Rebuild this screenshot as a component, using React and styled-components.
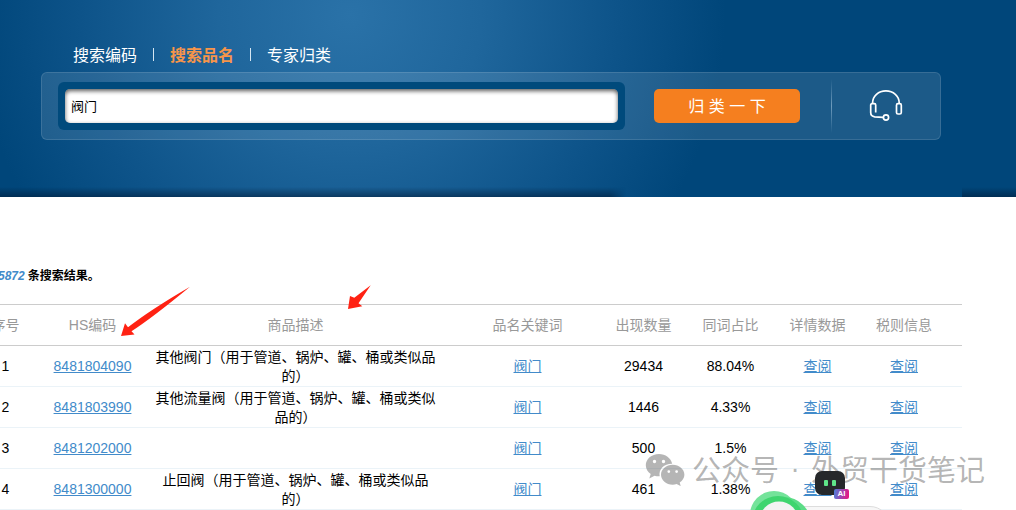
import { useState } from "react";
import styled, { createGlobalStyle } from "styled-components";

const GlobalStyle = createGlobalStyle`
  * {
    box-sizing: border-box;
  }
  body {
    margin: 0;
    background-color: white;
    color: black;
    font-family: "Liberation Sans", "Noto Sans CJK SC", sans-serif;
    font-size: 14px;
  }
`;

const Container = styled.div`
  position: relative;
  min-height: 100vh;
  overflow: hidden;
`;

/* search area */
const Hero = styled.header`
  position: relative;
  height: 197px;
  padding: 44px 75px 0 41px;
  background: radial-gradient(
    ellipse 375px 370px at 350px 15px,
    #2a72a8 0%,
    #1f669c 35%,
    #0d5389 72%,
    #00467a 100%
  );
`;
const HeroShade = styled.div`
  position: absolute;
  left: ${({ $left }) => $left};
  right: ${({ $right }) => $right};
  bottom: 0;
  height: 10px;
  background: linear-gradient(transparent, rgba(0, 20, 45, 0.5));
  mask-image: ${({ $fade }) =>
    $fade ? "linear-gradient(to left, transparent, black 16px)" : "none"};
`;
const Tabs = styled.nav`
  display: flex;
  align-items: center;
  height: 24px;
  padding-left: 32px;
`;
const Tab = styled.a`
  font-size: 16px;
  line-height: 24px;
  text-decoration: none;
  color: ${({ $active }) => ($active ? "#f7954a" : "white")};
  font-weight: ${({ $active }) => ($active ? 700 : 400)};
  & + & {
    margin-left: 16px;
    padding-left: 17px;
    background: linear-gradient(#d5e6f2, #d5e6f2) 0 4px / 1px 13px no-repeat;
  }
`;
const SearchPanel = styled.form`
  display: flex;
  align-items: center;
  height: 68px;
  margin-top: 4px;
  max-width: 900px;
  padding-left: 16px;
  border: 1px solid rgba(255, 255, 255, 0.12);
  border-radius: 6px;
  background-color: rgba(255, 255, 255, 0.11);
`;
const InputBox = styled.label`
  flex: 1;
  display: flex;
  padding: 7px;
  border-radius: 6px;
  background-color: #004a7c;
`;
const SearchInput = styled.input`
  width: 100%;
  height: 34px;
  padding: 0 6px 2px;
  border: 0;
  border-radius: 5px;
  outline: 0;
  background-color: white;
  color: black;
  box-shadow: inset 0 2px 4px rgba(0, 0, 0, 0.65);
  font-family: inherit;
  font-size: 13px;
`;
const SearchButton = styled.button`
  width: 146px;
  height: 34px;
  margin: 0 31px 0 29px;
  padding: 0 0 3px;
  border: 0;
  border-radius: 5px;
  background-color: #f57f1f;
  color: white;
  font-family: inherit;
  font-size: 16px;
  cursor: pointer;
`;
const Divider = styled.span`
  width: 1px;
  height: 54px;
  background: linear-gradient(transparent, #6f9cbd, transparent);
`;
const Service = styled.a`
  width: 108px;
  display: flex;
  justify-content: center;
`;

/* results, the table starts left of the window */
const Results = styled.main`
  margin: 0 54px 0 -38px;
`;
const Summary = styled.p`
  margin: 0;
  padding: 70px 0 19px 36px;
  font-size: 12px;
  line-height: 18px;
  font-weight: 700;
  & em {
    margin-right: 3px;
    color: #428bca;
  }
`;
const Table = styled.table`
  width: 100%;
  table-layout: fixed;
  border-collapse: collapse;
  & tr {
    height: 41px;
  }
  & thead tr {
    border-top: 1px solid #ccc;
    border-bottom: 1px solid #ccc;
  }
  & tbody tr {
    border-bottom: 1px solid #ebf3f8;
  }
`;
const HeadCell = styled.th`
  width: ${({ $width }) => $width};
  padding: 0 ${({ $last }) => ($last ? 15 : 0)}px 0 0;
  color: #999;
  font-weight: 400;
  line-height: 19px;
`;
const Cell = styled.td`
  padding: ${({ $pad }) => $pad || "0"};
  text-align: center;
  line-height: 19px;
  & a {
    color: #428bca;
    text-decoration: underline;
  }
`;

/* floating things */
const Arrows = styled.svg`
  position: absolute;
  left: 120px;
  top: 284px;
`;
const Watermark = styled.div`
  position: absolute;
  left: 645px;
  top: 447px;
  display: flex;
  align-items: center;
  color: rgba(90, 90, 90, 0.45);
  font-family: "Noto Sans CJK SC", sans-serif;
  font-size: 29px;
  line-height: 42px;
  white-space: nowrap;
  pointer-events: none;
  & svg {
    margin-right: 6px;
  }
  & span {
    width: 32px;
    font-family: "Liberation Sans", sans-serif;
    text-align: center;
  }
`;
const Assistant = styled.div`
  position: absolute;
  left: 750px;
  top: 470px;
  width: 142px;
  height: 40px;
  overflow: hidden;
`;
const Bubble = styled.div`
  position: absolute;
  left: 20px;
  top: 36px;
  width: 120px;
  height: 40px;
  border: 1px solid #ddd;
  border-radius: 20px;
  background-color: #f7f7f7;
`;
const Drawing = styled.svg`
  position: absolute;
  left: 0;
  top: 0;
`;
const AiBadge = styled.span`
  position: absolute;
  left: 84px;
  top: 19px;
  width: 15px;
  height: 10px;
  border-radius: 2px;
  background: linear-gradient(100deg, #4a83dc, #a044b0 50%, #f0127c);
  color: white;
  font-size: 8px;
  font-weight: 700;
  line-height: 10px;
  text-align: center;
`;

const columns = [
  { name: "序号", width: "8.7%" },
  { name: "HS编码", width: "8.7%" },
  { name: "商品描述", width: "31.9%" },
  { name: "品名关键词", width: "14.5%" },
  { name: "出现数量", width: "8.7%" },
  { name: "同词占比", width: "8.7%" },
  { name: "详情数据", width: "8.7%" },
  { name: "税则信息", width: "10.1%" },
];

const rows = [
  {
    code: "8481804090",
    desc: "其他阀门（用于管道、锅炉、罐、桶或类似品的）",
    count: "29434",
    ratio: "88.04%",
  },
  {
    code: "8481803990",
    desc: "其他流量阀（用于管道、锅炉、罐、桶或类似品的）",
    count: "1446",
    ratio: "4.33%",
  },
  { code: "8481202000", desc: "", count: "500", ratio: "1.5%" },
  {
    code: "8481300000",
    desc: "止回阀（用于管道、锅炉、罐、桶或类似品的）",
    count: "461",
    ratio: "1.38%",
  },
];

const tabs = ["搜索编码", "搜索品名", "专家归类"];

function Headset() {
  return (
    <svg width="36" height="34" fill="none" stroke="white" strokeWidth="1.7">
      <path d="M4.600 14.500V14C4.600 7 10.500 1.900 17.900 1.900S31.200 7 31.200 14v.5" />
      <path d="M7.700 23.500v-7.500q0-1.300-1.300-1.300H4q-1.300 0-1.300 1.300v7.500q0 3.800 4 4.300l8.300.5" />
      <rect x="28.500" y="14.700" width="4.800" height="10.300" rx="1.500" />
      <circle cx="18" cy="28.500" r="2.600" />
    </svg>
  );
}

function WeChat() {
  return (
    <svg width="41" height="36" fill="currentColor">
      <path
        fillRule="evenodd"
        d="M14 4C6.500 4 .8 9 .8 15.300c0 3.600 1.900 6.700 4.900 8.800L4.300 28.400l5.200-2.700c1.700.5 3.400.7 5.200.6-1.300-7.300 4.700-12.800 12.500-12.600C25.900 8 20.400 4 14 4zM9.500 9.800a1.700 1.700 0 1 1 0 3.400 1.700 1.700 0 0 1 0-3.400zm9 0a1.700 1.700 0 1 1 0 3.400 1.700 1.700 0 0 1 0-3.400z"
      />
      <path
        fillRule="evenodd"
        d="M27.700 14.800c-6.500 0-11.700 4.500-11.700 10s5.200 9.900 11.700 9.900c1.400 0 2.700-.2 3.900-.6l4.100 2-1-3.500c2.800-1.900 4.700-4.700 4.700-7.800 0-5.500-5.200-10-11.700-10zM23.800 20.200a1.400 1.400 0 1 1 0 2.800 1.400 1.400 0 0 1 0-2.800zm7.800 0a1.400 1.400 0 1 1 0 2.800 1.400 1.400 0 0 1 0-2.800z"
      />
    </svg>
  );
}

export default function App() {
  const [active, setActive] = useState("搜索品名");
  const [keyword, setKeyword] = useState("阀门");

  return (
    <Container>
      <GlobalStyle />
      <Hero>
        <HeroShade $left="0" $right="calc(100% - 626px)" $fade />
        <HeroShade $left="962px" $right="0" />
        <Tabs>
          {tabs.map((tab) => (
            <Tab
              key={tab}
              href="#"
              $active={tab === active}
              onClick={() => setActive(tab)}
            >
              {tab}
            </Tab>
          ))}
        </Tabs>
        <SearchPanel onSubmit={(e) => e.preventDefault()}>
          <InputBox>
            <SearchInput
              type="text"
              aria-label="搜索品名"
              value={keyword}
              onChange={(e) => setKeyword(e.target.value)}
            />
          </InputBox>
          <SearchButton type="submit">归 类 一 下</SearchButton>
          <Divider />
          <Service href="#" aria-label="客服">
            <Headset />
          </Service>
        </SearchPanel>
      </Hero>

      <Results>
        <Summary>
          <em>5872</em>条搜索结果。
        </Summary>
        <Table>
          <thead>
            <tr>
              {columns.map(({ name, width }) => (
                <HeadCell
                  key={name}
                  $width={width}
                  $last={name === "税则信息"}
                >
                  {name}
                </HeadCell>
              ))}
            </tr>
          </thead>
          <tbody>
            {rows.map(({ code, desc, count, ratio }, i) => (
              <tr key={code}>
                <Cell>{i + 1}</Cell>
                <Cell>
                  <a href="#">{code}</a>
                </Cell>
                <Cell $pad="1px 18px 0">{desc}</Cell>
                <Cell>
                  <a href="#">阀门</a>
                </Cell>
                <Cell>{count}</Cell>
                <Cell>{ratio}</Cell>
                <Cell>
                  <a href="#">查阅</a>
                </Cell>
                <Cell $pad="0 15px 0 0">
                  <a href="#">查阅</a>
                </Cell>
              </tr>
            ))}
          </tbody>
        </Table>
      </Results>

      <Arrows width="254" height="54" fill="#ff2213">
        <path d="M1 52 5 39.300 8 43.300Q30 26 70 2.700 32 34 11.500 47.200L14.500 50.500Z" />
        <path d="M228 25 230 12 234.300 13.700 250.700 1.300 238.500 19.300 242.300 22.300Z" />
      </Arrows>
      <Watermark>
        <WeChat />
        公众号<span>·</span>外贸干货笔记
      </Watermark>
      <Assistant>
        <Bubble />
        <Drawing width="142" height="40">
          <circle cx="24" cy="45" r="24" fill="#74e39a" />
          <circle cx="34" cy="54" r="27" fill="#5cdc87" />
          <circle cx="28" cy="52" r="26" fill="#3fd56f" />
          <circle cx="29" cy="51" r="19.600" fill="#f3f3f3" />
          <rect x="65" y="1" width="30" height="24" rx="7" fill="#26282b" />
          <rect x="74" y="10" width="4" height="6" rx="1" fill="#5fe589" />
          <rect x="82" y="10" width="4" height="6" rx="1" fill="#5fe589" />
        </Drawing>
        <AiBadge>AI</AiBadge>
      </Assistant>
    </Container>
  );
}
